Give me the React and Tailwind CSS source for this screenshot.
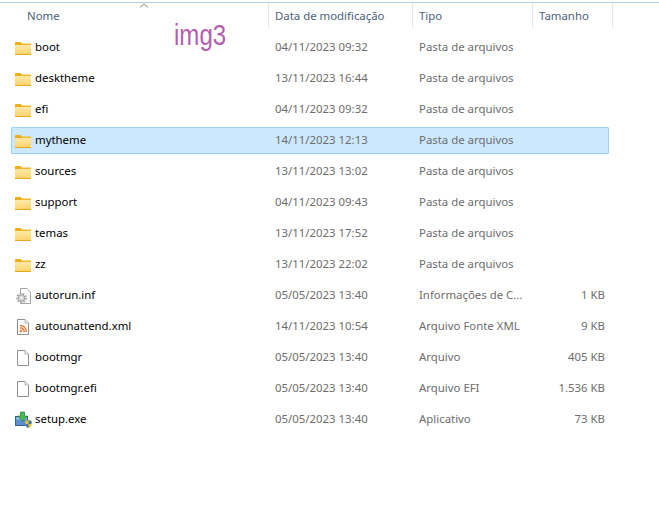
const folders = [
  ["boot", "04/11/2023 09:32"],
  ["desktheme", "13/11/2023 16:44"],
  ["efi", "04/11/2023 09:32"],
  ["mytheme", "14/11/2023 12:13", true],
  ["sources", "13/11/2023 13:02"],
  ["support", "04/11/2023 09:43"],
  ["temas", "13/11/2023 17:52"],
  ["zz", "13/11/2023 22:02"],
];

const files = [
  ["autorun.inf", "05/05/2023 13:40", "Informações de C...", "1 KB", "gear"],
  ["autounattend.xml", "14/11/2023 10:54", "Arquivo Fonte XML", "9 KB", "xml"],
  ["bootmgr", "05/05/2023 13:40", "Arquivo", "405 KB", "doc"],
  ["bootmgr.efi", "05/05/2023 13:40", "Arquivo EFI", "1.536 KB", "doc"],
  ["setup.exe", "05/05/2023 13:40", "Aplicativo", "73 KB", "exe"],
];

function FolderIcon() {
  return (
    <svg width="16" height="14" viewBox="0 0 16 14" className="shrink-0">
      <defs>
        <linearGradient id="fg" x1="0" y1="0" x2="0" y2="1">
          <stop offset="0" stopColor="#ffe9a8" />
          <stop offset="1" stopColor="#fdd36c" />
        </linearGradient>
      </defs>
      <path d="M0 2 Q0 1 1 1 H5.5 L7.5 3 V5 H0 Z" fill="#f0ad17" />
      <rect x="6" y="2.5" width="10" height="2" fill="#f2b92f" />
      <rect x="0" y="4" width="16" height="9.5" rx="0.6" fill="url(#fg)" />
      <rect x="0" y="13" width="16" height="1" fill="#e8aa1d" />
    </svg>
  );
}

function DocBase({ children }) {
  return (
    <svg width="16" height="16" viewBox="0 0 16 16" className="shrink-0">
      <path d="M2.5 0.5 H10 L13.5 4 V15.5 H2.5 Z" fill="#ffffff" stroke="#8f8f8f" />
      <path d="M10 0.5 V4 H13.5" fill="#f1f1f1" stroke="#b5b5b5" />
      {children}
    </svg>
  );
}

function FileIcon({ kind }) {
  if (kind === "doc") return <DocBase />;
  if (kind === "xml")
    return (
      <DocBase>
        <rect x="4.5" y="6" width="7" height="7.5" fill="#fbe6d6" />
        <circle cx="5.8" cy="12.2" r="1.1" fill="#d9712b" />
        <path d="M5 8.8 A4 4 0 0 1 9.2 13 M5 6.4 A6.4 6.4 0 0 1 11.4 13" fill="none" stroke="#dc7b38" strokeWidth="1.3" />
      </DocBase>
    );
  if (kind === "gear")
    return (
      <svg width="17" height="16" viewBox="0 0 17 16" className="shrink-0">
        <path d="M5.5 0.5 H12 L15.5 4 V15.5 H5.5 Z" fill="#fbfbfb" stroke="#a4a4a4" />
        <circle cx="6.5" cy="10" r="4.2" fill="none" stroke="#a8a8a8" strokeWidth="2.4" strokeDasharray="1.7 1.2" />
        <circle cx="6.5" cy="10" r="3.2" fill="#d6d6d6" stroke="#9a9a9a" strokeWidth="0.8" />
        <circle cx="6.5" cy="10" r="1.3" fill="#f5f5f5" />
      </svg>
    );
  return (
    <svg width="17" height="17" viewBox="0 0 17 17" className="shrink-0">
      <rect x="0.5" y="5.5" width="12" height="9" fill="#5b90d2" stroke="#3a5f92" />
      <rect x="1.5" y="6.5" width="10" height="2" fill="#a9c9ec" />
      <path d="M5.5 1 H9.5 V5 H12 L7.5 10.5 L3 5 H5.5 Z" fill="#45bd4f" stroke="#1f7f34" strokeWidth="0.7" />
      <path d="M10.5 10 L13.5 9 L16.5 10 V13.5 Q16.5 16 13.5 17 Q10.5 16 10.5 13.5 Z" fill="#f5c518" />
      <path d="M13.5 9 L16.5 10 V13 H13.5 Z M13.5 13 V17 Q10.5 16 10.5 13.5 V13 Z" fill="#3b78c4" />
    </svg>
  );
}

function Row({ name, date, type, size, icon, selected }) {
  return (
    <div
      className={`flex items-center h-[27px] mb-1 w-[598px] ml-[11px] border rounded-[1px] ${
        selected ? "bg-[#cce8ff] border-[#99d1ff]" : "border-transparent"
      }`}
    >
      <div className="w-[19px] pl-[3px] flex justify-start items-center shrink-0 h-4">{icon}</div>
      <div className="w-[244px] pl-1 pb-[2px] text-[#000000] shrink-0">{name}</div>
      <div className="w-[144px] pb-[2px] text-[#6d6d6d] shrink-0">{date}</div>
      <div className="w-[116px] pb-[2px] text-[#6d6d6d] shrink-0 whitespace-nowrap">{type}</div>
      <div className="w-[70px] pb-[2px] text-right text-[#6d6d6d] shrink-0">{size}</div>
    </div>
  );
}

function HeaderCell({ w, pad, label }) {
  return (
    <div className={`${w} ${pad} h-[25px] flex items-center border-r border-[#e5e5e5] text-[#4c607a] shrink-0`}>
      {label}
    </div>
  );
}

export default function App() {
  return (
    <div className="relative w-[659px] h-[528px] bg-white overflow-hidden text-[11.4px] font-['Noto_Sans','Open_Sans',sans-serif] pt-[2px]">
      <div className="h-px bg-[#b9d1e3] w-full" />
      <div className="flex h-[25px]">
        <HeaderCell w="w-[269px]" pad="pl-[27px]" label="Nome" />
        <HeaderCell w="w-[144px]" pad="pl-[6px]" label="Data de modificação" />
        <HeaderCell w="w-[120px]" pad="pl-[6px]" label="Tipo" />
        <HeaderCell w="w-[80px]" pad="pl-[6px]" label="Tamanho" />
      </div>
      <div className="pt-[6px]">
        {folders.map(([name, date, selected]) => (
          <Row key={name} name={name} date={date} type="Pasta de arquivos" icon={<FolderIcon />} selected={selected} />
        ))}
        {files.map(([name, date, type, size, kind]) => (
          <Row key={name} name={name} date={date} type={type} size={size} icon={<FileIcon kind={kind} />} />
        ))}
      </div>
      <svg width="10" height="5" viewBox="0 0 10 5" className="absolute left-[139px] top-[3px]">
        <path d="M1 4.5 L5 0.8 L9 4.5" fill="none" stroke="#8a8a8a" />
      </svg>
      <div className="absolute left-[174px] top-[18px] text-[29px] leading-[34px] text-[#b25fae] font-['Liberation_Sans',sans-serif] scale-x-[0.83] origin-left">
        img3
      </div>
    </div>
  );
}
